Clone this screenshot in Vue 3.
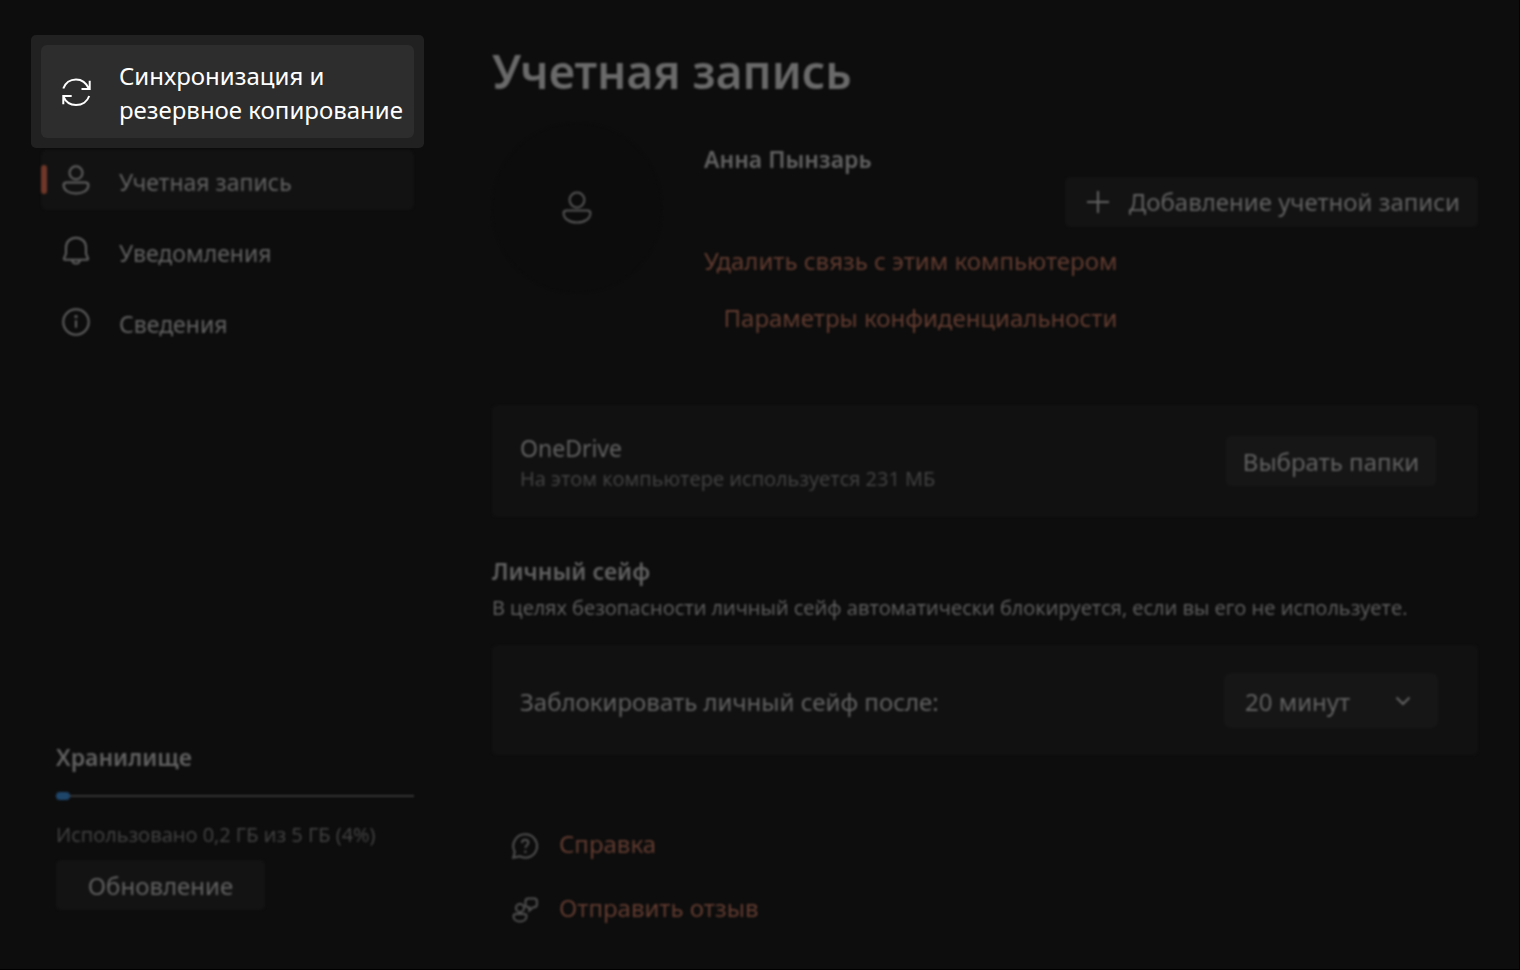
<script setup>
import { ref } from 'vue'

const navItems = [
  { id: 'account', label: 'Учетная запись' },
  { id: 'alerts', label: 'Уведомления' },
  { id: 'about', label: 'Сведения' },
]
const current = ref('account')
const lockAfter = ref('20 минут')
const usedPercent = 4
</script>

<template>
  <div class="page">
    <aside class="sidebar">
      <nav class="nav">
        <div class="spotlight">
          <button type="button" class="nav-item sync">
            <svg class="icon" viewBox="0 0 30 30" aria-hidden="true">
              <path d="M2.3 11.5C4.2 6 9.2 2.4 15 2.4c5.6 0 10.400 3.600 12.900 9.300M28.700 3.700v8.400h-8.200M28.200 19c-1.900 5.500-7 9-13.200 9C9.400 28 4.600 24.600 2.500 19.600M2.300 27.200V19h8.400" />
            </svg>
            <span>Синхронизация и<br>резервное копирование</span>
          </button>
        </div>
        <button
          v-for="item in navItems"
          :key="item.id"
          type="button"
          class="nav-item soft"
          :class="{ active: item.id === current }"
          @click="current = item.id"
        >
          <svg v-if="item.id === 'account'" class="icon" viewBox="0 0 30 30" aria-hidden="true">
            <circle cx="15" cy="7.800" r="6.500" />
            <path d="M5.500 17.500h19c1.700 0 2.900 1.100 2.900 2.700 0 5-5.200 8.300-12.400 8.300S2.600 25.200 2.600 20.200c0-1.600 1.200-2.700 2.900-2.700z" />
          </svg>
          <svg v-else-if="item.id === 'alerts'" class="icon" viewBox="0 0 30 30" aria-hidden="true">
            <path d="M15 1.800C9.200 1.800 5 6 5 11.500v6.200L3 22.300c-.3.800.1 1.400.9 1.400h22.200c.8 0 1.200-.6.900-1.400l-2-4.600v-6.200C25 6 20.800 1.800 15 1.800z" />
            <path d="M11.200 24c.2 2.200 1.800 3.600 3.800 3.600s3.600-1.400 3.800-3.600" />
          </svg>
          <svg v-else class="icon" viewBox="0 0 30 30" aria-hidden="true">
            <circle cx="15" cy="15" r="12.700" />
            <path d="M15 13.300v7.500" />
            <circle class="dot" cx="15" cy="9.600" r="1.600" />
          </svg>
          <span>{{ item.label }}</span>
        </button>
      </nav>

      <section class="storage soft">
        <h2>Хранилище</h2>
        <div class="meter" role="progressbar" aria-label="Хранилище" :aria-valuenow="usedPercent" aria-valuemin="0" aria-valuemax="100">
          <div class="fill" :style="{ width: usedPercent + '%' }"></div>
        </div>
        <p class="small muted">Использовано 0,2 ГБ из 5 ГБ (4%)</p>
        <button type="button" class="btn">Обновление</button>
      </section>
    </aside>

    <main class="content soft">
      <h1>Учетная запись</h1>

      <section class="profile">
        <div class="avatar">
          <svg class="icon avatar-icon" viewBox="0 0 30 34" aria-hidden="true">
            <circle cx="15" cy="9" r="7.400" />
            <path d="M4.500 19.500h21c1.700 0 2.900 1.100 2.900 2.700 0 5.300-5.600 9.300-13.400 9.300S1.600 27.500 1.600 22.200c0-1.600 1.200-2.700 2.900-2.700z" />
          </svg>
        </div>
        <div class="details">
          <h2>Анна Пынзарь</h2>
          <button type="button" class="btn add">
            <svg class="plus" viewBox="0 0 22 22" aria-hidden="true"><path d="M11 0v22M0 11h22" /></svg>
            <span>Добавление учетной записи</span>
          </button>
          <div class="links">
            <a href="#">Удалить связь с этим компьютером</a>
            <a href="#">Параметры конфиденциальности</a>
          </div>
        </div>
      </section>

      <section class="card">
        <div class="card-text">
          <h3>OneDrive</h3>
          <p class="small muted">На этом компьютере используется 231 МБ</p>
        </div>
        <button type="button" class="btn choose">Выбрать папки</button>
      </section>

      <section class="vault">
        <h2>Личный сейф</h2>
        <p class="small">В целях безопасности личный сейф автоматически блокируется, если вы его не используете.</p>
        <div class="card lock">
          <label class="card-text" for="lock-after">Заблокировать личный сейф после:</label>
          <div class="select">
            <select id="lock-after" v-model="lockAfter">
              <option>20 минут</option>
              <option>1 час</option>
              <option>2 часа</option>
              <option>4 часа</option>
            </select>
            <svg class="chevron" viewBox="0 0 16 10" aria-hidden="true"><path d="M1.500 1.500 8 8l6.500-6.500" /></svg>
          </div>
        </div>
      </section>

      <ul class="help">
        <li>
          <svg class="help-icon" viewBox="0 0 26 26" aria-hidden="true">
            <path d="M13.300 1.300a11.700 11.700 0 1 1-5.700 21.900L1.300 24.700l1.500-6A11.700 11.700 0 0 1 13.300 1.300z" />
            <path d="M10 10c0-2 1.300-3.200 3.200-3.200s3.200 1.200 3.200 2.900c0 2.400-3 2.700-3 5.300" />
            <circle class="dot" cx="13.300" cy="18.700" r="1.300" />
          </svg>
          <a href="#">Справка</a>
        </li>
        <li>
          <svg class="help-icon" viewBox="0 0 26 26" aria-hidden="true">
            <circle cx="8" cy="11" r="4" />
            <path d="M4 17h8c1.500 0 2.500.9 2.500 2.300 0 3-2.700 5.200-6.500 5.200s-6.500-2.200-6.500-5.200C1.500 17.900 2.500 17 4 17z" />
            <path d="M16.200 1.500h6c1.600 0 2.700 1.100 2.700 2.700v3.300c0 1.600-1.100 2.700-2.700 2.700h-1L17.300 13.500v-3.300h-1.100c-1.600 0-2.700-1.100-2.700-2.700V4.200c0-1.600 1.100-2.700 2.700-2.700z" />
          </svg>
          <a href="#">Отправить отзыв</a>
        </li>
      </ul>
    </main>
  </div>
</template>

<style>
body {
  background: #0d0d0d;
}
</style>

<style scoped>
* {
  box-sizing: border-box;
}

.page {
  display: grid;
  grid-template-columns: 373px minmax(0, 1fr);
  column-gap: 78px;
  min-height: 100vh;
  padding: 35px 41px 43px;
  background: #0d0d0d;
  border-right: 1px solid #000;
  border-bottom: 1px solid #000;
  color: #626262;
  font: 400 24px/32px "Noto Sans", "Open Sans", sans-serif;
}

h1,
h2,
h3,
p,
ul {
  margin: 0;
  padding: 0;
}

h1 {
  margin-top: 6px;
  font-size: 46px;
  line-height: 60px;
  font-weight: 600;
  color: #6a6a6a;
}

h2 {
  font-size: 23px;
  line-height: 32px;
  font-weight: 600;
}

h3 {
  font-size: 23px;
  font-weight: 400;
}

a {
  color: #633c30;
  text-decoration: none;
}

button,
select {
  border: 0;
  font: inherit;
  color: inherit;
  cursor: pointer;
}

svg {
  flex: none;
  fill: none;
  stroke: currentColor;
  stroke-width: 2;
}

.dot {
  fill: currentColor;
  stroke: none;
}

.soft {
  filter: blur(1px);
}

.small {
  font: 400 20px/30px "Open Sans", "Noto Sans", sans-serif;
}

.muted {
  color: #454545;
}

.sidebar {
  display: flex;
  flex-direction: column;
  justify-content: space-between;
  padding-bottom: 16px;
}

.nav {
  display: flex;
  flex-direction: column;
  gap: 11px;
}

.spotlight {
  margin: 0 -10px -9px;
  padding: 10px;
  border-radius: 5px;
  background: #212121;
}

.nav-item {
  position: relative;
  display: flex;
  align-items: center;
  gap: 28px;
  width: 100%;
  height: 60px;
  padding: 0 0 0 20px;
  border-radius: 6px;
  background: none;
  font-size: 23px;
  text-align: left;
  white-space: nowrap;
}

.nav-item span {
  padding-top: 3px;
}

.nav-item.sync {
  height: 93px;
  background: #2d2d2d;
  color: #fff;
  font-size: 24px;
  line-height: 34px;
}

.nav-item.active {
  background: #121212;
}

.nav-item.active::before {
  content: "";
  position: absolute;
  left: 0;
  top: 15px;
  width: 6px;
  height: 29px;
  border-radius: 3px;
  background: #6f3728;
}

.icon {
  width: 30px;
  height: 30px;
}

.storage {
  padding-left: 15px;
}

.meter {
  display: flex;
  align-items: center;
  height: 8px;
  margin: 19px 0 20px;
  background: linear-gradient(#363636, #363636) center / 100% 2px no-repeat;
}

.fill {
  height: 8px;
  border-radius: 4px;
  background: #1e466b;
}

.btn {
  height: 50px;
  padding: 2px 0 0;
  border-radius: 5px;
  background: #131313;
}

.storage .btn {
  display: block;
  width: 209px;
  margin-top: 10px;
}

.profile {
  display: flex;
  gap: 42px;
  margin-top: 22px;
}

.avatar {
  display: grid;
  place-items: center;
  flex: none;
  width: 170px;
  height: 170px;
  border-radius: 50%;
  background: #0c0c0c;
  color: #555;
}

.avatar-icon {
  height: 34px;
}

.details {
  display: flex;
  flex: 1;
  flex-direction: column;
  align-items: flex-start;
  padding-top: 20px;
}

.add {
  display: flex;
  align-items: center;
  align-self: flex-end;
  gap: 20px;
  margin-top: 2px;
  padding: 0 18px 0 22px;
}

.plus {
  width: 22px;
  height: 22px;
}

.links {
  display: flex;
  flex-direction: column;
  align-items: flex-end;
  gap: 25px;
  margin-top: 18px;
}

.card {
  display: flex;
  align-items: center;
  justify-content: space-between;
  min-height: 112px;
  margin-top: 71px;
  padding: 0 42px 0 28px;
  border-radius: 5px;
  background: #111;
}

.card-text {
  padding-top: 4px;
}

.choose {
  width: 210px;
  background: #161616;
}

.vault {
  margin-top: 38px;
}

.vault .small {
  margin-top: 6px;
}

.card.lock {
  min-height: 110px;
  margin-top: 22px;
  padding-right: 40px;
}

.select {
  position: relative;
}

.select select {
  display: block;
  width: 214px;
  height: 55px;
  padding: 3px 48px 0 21px;
  border-radius: 7px;
  background: #161616;
  appearance: none;
}

.chevron {
  position: absolute;
  top: 23px;
  right: 27px;
  width: 16px;
  height: 10px;
  pointer-events: none;
}

.help {
  display: flex;
  flex-direction: column;
  gap: 32px;
  margin-top: 73px;
  padding-left: 20px;
  list-style: none;
}

.help li {
  display: flex;
  align-items: center;
  gap: 21px;
}

.help-icon {
  width: 26px;
  height: 26px;
  margin-top: 4px;
  color: #515151;
}
</style>
